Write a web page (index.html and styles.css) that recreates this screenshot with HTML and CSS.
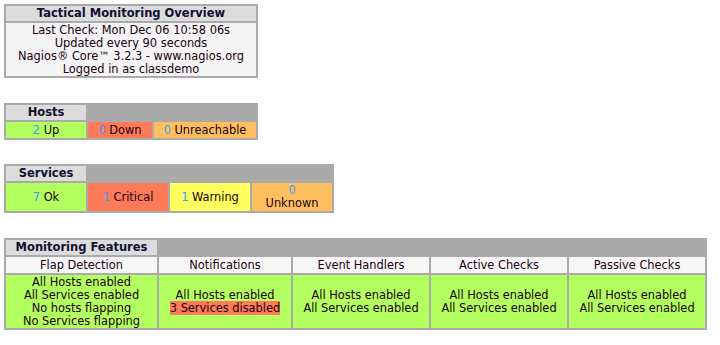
FILE: index.html
```html
<!DOCTYPE html>
<html lang="en">
<head>
    <meta charset="UTF-8">
    <title>Tactical Monitoring Overview</title>
    <link rel="stylesheet" href="styles.css">
</head>
<body>
    <table class="box overview">
        <tr><th>Tactical Monitoring Overview</th></tr>
        <tr>
            <td class="info">
                Last Check: Mon Dec 06 10:58 06s<br>
                Updated every 90 seconds<br>
                Nagios&reg; Core&trade; 3.2.3 - www.nagios.org<br>
                Logged in as classdemo
            </td>
        </tr>
    </table>

    <table class="box hosts">
        <tr><th>Hosts</th><th class="blank" colspan="2"></th></tr>
        <tr>
            <td class="ok w-up"><span class="num">2</span> Up</td>
            <td class="critical w-down"><span class="num">0</span> Down</td>
            <td class="unknown w-unreach"><span class="num">0</span> Unreachable</td>
        </tr>
    </table>

    <table class="box services">
        <tr><th>Services</th><th class="blank" colspan="3"></th></tr>
        <tr>
            <td class="ok"><span class="num">7</span> Ok</td>
            <td class="critical"><span class="num">1</span> Critical</td>
            <td class="warning"><span class="num">1</span> Warning</td>
            <td class="unknown"><span class="num">0</span><br>Unknown</td>
        </tr>
    </table>

    <table class="box features">
        <tr><th>Monitoring Features</th><th class="blank" colspan="4"></th></tr>
        <tr class="sub">
            <td class="w-flap">Flap Detection</td>
            <td class="w-notif">Notifications</td>
            <td class="w-feat">Event Handlers</td>
            <td class="w-feat">Active Checks</td>
            <td class="w-feat">Passive Checks</td>
        </tr>
        <tr>
            <td class="ok">All Hosts enabled<br>All Services enabled<br>No hosts flapping<br>No Services flapping</td>
            <td class="ok">All Hosts enabled<br><span class="disabled">3 Services disabled</span></td>
            <td class="ok">All Hosts enabled<br>All Services enabled</td>
            <td class="ok">All Hosts enabled<br>All Services enabled</td>
            <td class="ok">All Hosts enabled<br>All Services enabled</td>
        </tr>
    </table>
</body>
</html>
```

FILE: styles.css
```css
body {
    font-family: "DejaVu Sans", Verdana, sans-serif;
    font-size: 11.4px;
    color: #1a0010;
    background-color: #fff;
    margin: 4px;
}
.box {
    background-color: #aaa;
    border-spacing: 2px;
    border: 0;
    text-align: center;
    line-height: 13px;
}
.box th {
    background-color: #dcdcdc;
    font-weight: bold;
    font-size: 11.5px;
    color: #101030;
    height: 15px;
    padding: 0;
}
.box th.blank {
    background-color: transparent;
}
.box td {
    padding: 0;
    height: 15px;
}
.overview {
    width: 254px;
    margin-bottom: 25px;
}
.overview td.info {
    background-color: #f4f4f4;
    height: 53px;
}
.hosts {
    margin-bottom: 24px;
}
.hosts th {
    width: 80px;
}
.hosts td {
    height: 16px;
}
.w-up { width: 80px; }
.w-down { width: 64px; }
.w-unreach { width: 102px; }
.services {
    margin-bottom: 25px;
}
.services td {
    width: 80px;
    height: 28px;
}
.features td {
    vertical-align: middle;
}
.features .sub td {
    background-color: #f6f6f6;
    height: 16px;
}
.features td.ok {
    height: 53px;
}
.w-flap { width: 151px; }
.w-notif { width: 132px; }
.w-feat { width: 136px; }
.ok { background-color: #b3ff5f; }
.critical { background-color: #ff7a59; }
.warning { background-color: #ffff5f; }
.unknown { background-color: #ffbf5f; }
.num {
    color: #3a9ef2;
}
.disabled {
    background-color: #ff7a59;
}
```
